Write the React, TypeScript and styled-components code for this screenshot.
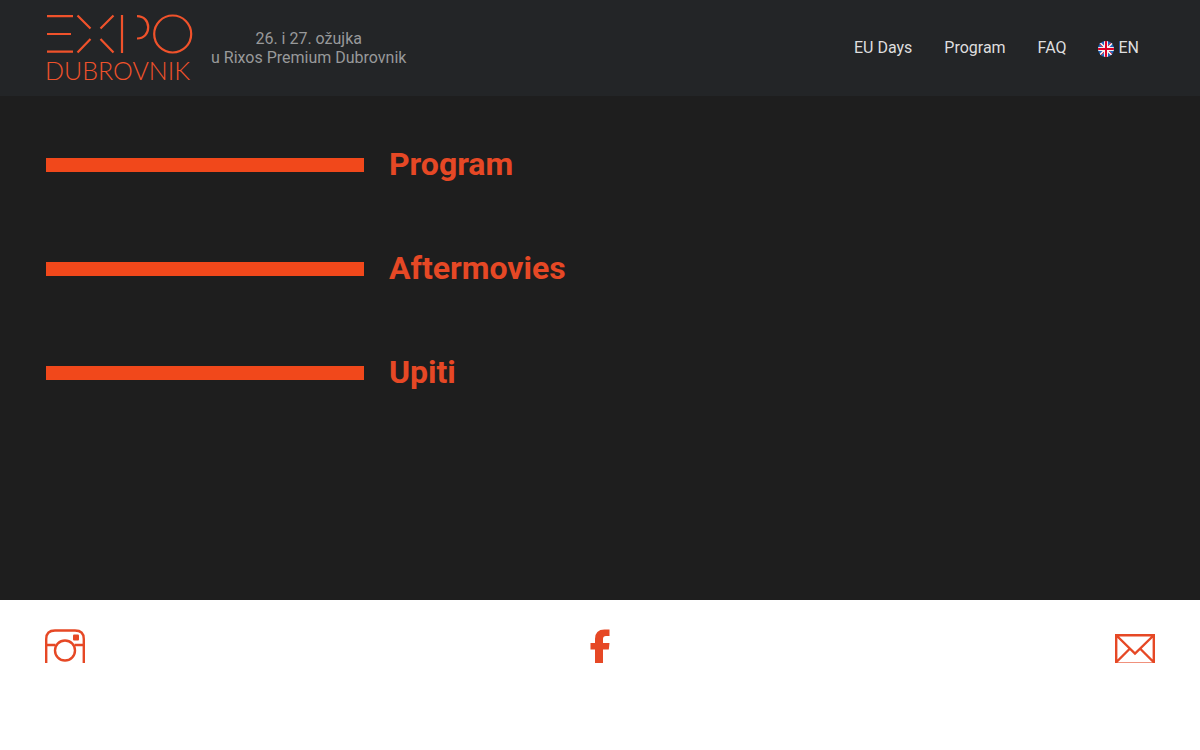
import React from "react";
import styled, { createGlobalStyle } from "styled-components";

const GlobalStyle = createGlobalStyle`
  *, *::before, *::after { box-sizing: border-box; }
  body {
    margin: 0;
    background: #ffffff;
    font-family: Roboto, "Liberation Sans", sans-serif;
    font-size: 16px;
    line-height: 19px;
  }
`;

const Header = styled.header`
  display: flex;
  align-items: center;
  justify-content: space-between;
  height: 96px;
  padding: 0 61px 0 46px;
  background: #232527;
`;

const Brand = styled.div`
  display: flex;
  align-items: center;
  gap: 17px;
`;

const HomeLink = styled.a`
  display: block;
  height: 72px;
`;

const LogoSvg = styled.svg`
  display: block;
  fill: none;
  stroke: #f0522b;
  stroke-width: 2.2;
  overflow: visible;

  text {
    font-family: Lato, sans-serif;
    font-size: 25px;
    font-weight: 300;
    fill: #f0522b;
    stroke: none;
  }
`;

const EventInfo = styled.p`
  margin: 0;
  text-align: center;
  color: #98999a;
`;

const Nav = styled.nav`
  display: flex;
  gap: 32px;
  padding-bottom: 2px;
`;

const NavLink = styled.a`
  display: flex;
  align-items: center;
  gap: 4px;
  color: #dededf;
  text-decoration: none;
`;

const Flag = styled.svg`
  display: block;
  margin-top: 3px;
`;

const Main = styled.main`
  display: flex;
  flex-direction: column;
  gap: 66px;
  min-height: calc(80vh - 96px);
  padding: 49px 45px 66px 46px;
  background: #1e1e1e;
`;

const Section = styled.section`
  display: grid;
  grid-template-columns: 22fr 53fr;
  column-gap: 25px;
  align-items: center;
`;

const Bar = styled.div`
  height: 14px;
  margin-top: 2px;
  background: #f1481b;
`;

const Title = styled.h2`
  margin: 0;
  font-size: 32px;
  line-height: 38px;
  font-weight: 700;
  color: #e64825;
`;

const Footer = styled.footer`
  display: flex;
  justify-content: space-between;
  padding: 29px 45px;
`;

const SocialLink = styled.a`
  display: block;
  color: #e64825;
`;

const SocialSvg = styled.svg`
  display: block;
  fill: none;
  stroke: currentColor;
  stroke-width: 2.4;
`;

function Logo() {
  return (
    <LogoSvg width="148" height="72" viewBox="46 12 148 72" aria-hidden="true">
      <path d="M47 16.200H73M47 34H71M47 51.700H73" />
      <path d="M77.500 15.500L90.500 28.500M113.500 15.500L100.500 28.500M90.500 39L77.500 52.500M100.500 39L113.500 52.500" />
      <path d="M122 15V53" />
      <path d="M137 16.200C144 16.200 148.200 21 148.200 27.300S144 38.500 137 38.500" />
      <circle cx="172.700" cy="34" r="18.500" />
      <text x="45" y="80">DUBROVNIK</text>
    </LogoSvg>
  );
}

function UkFlag() {
  return (
    <Flag width="16" height="16" viewBox="0 0 16 16" aria-hidden="true">
      <defs>
        <clipPath id="flag-circle"><circle cx="8" cy="8" r="8" /></clipPath>
      </defs>
      <g clipPath="url(#flag-circle)">
        <path fill="#1c64bd" d="M0 0H16V16H0Z" />
        <path stroke="#f0f0f0" strokeWidth="2.200" d="M1 1L15 15M15 1L1 15" />
        <path stroke="#d80027" strokeWidth="0.800" d="M1 2L7 8M9 8L15 14M14 1L8 7M8 9L2 15" />
        <path stroke="#f0f0f0" strokeWidth="4" d="M8 0V16M0 8H16" />
        <path stroke="#d80027" strokeWidth="2" d="M8 0V16M0 8H16" />
      </g>
    </Flag>
  );
}

const sections = ["Program", "Aftermovies", "Upiti"];

export default function App() {
  return (
    <>
      <GlobalStyle />
      <Header>
        <Brand>
          <HomeLink href="#" aria-label="Expo Dubrovnik"><Logo /></HomeLink>
          <EventInfo>26. i 27. ožujka<br />u Rixos Premium Dubrovnik</EventInfo>
        </Brand>
        <Nav>
          <NavLink href="#eu-days">EU Days</NavLink>
          <NavLink href="#program">Program</NavLink>
          <NavLink href="#faq">FAQ</NavLink>
          <NavLink href="#en"><UkFlag />EN</NavLink>
        </Nav>
      </Header>
      <Main>
        {sections.map((name) => (
          <Section key={name}>
            <Bar />
            <Title>{name}</Title>
          </Section>
        ))}
      </Main>
      <Footer>
        <SocialLink href="#instagram" aria-label="Instagram">
          <SocialSvg width="40" height="34" viewBox="0 0 40 34">
            <path d="M1.200 34V10Q1.200 1.500 10 1.500H30Q38.800 1.500 38.800 10V34M1 16H10.500M29.500 16H39" />
            <circle cx="20" cy="21.500" r="10" />
            <rect x="28" y="5.500" width="6" height="6" rx="1" fill="currentColor" stroke="none" />
          </SocialSvg>
        </SocialLink>
        <SocialLink href="#facebook" aria-label="Facebook">
          <SocialSvg width="40" height="34" viewBox="0 0 40 34">
            <path fill="currentColor" stroke="none" d="M15 34V20.500H10.500V14H15V10Q15 0.500 24.500 0.500H29.500V7H26Q23 7 23 10V14H29.500L28.800 20.500H23V34Z" />
          </SocialSvg>
        </SocialLink>
        <SocialLink href="#email" aria-label="E-mail">
          <SocialSvg width="40" height="34" viewBox="0 0 40 34">
            <path d="M1.200 34V6.200H38.800V34M1.500 6.500L20 24.500L38.500 6.500M1.500 33L14.500 20M38.500 33L25.500 20" />
            <path strokeWidth="1" opacity="0.600" d="M1 33.500H39" />
          </SocialSvg>
        </SocialLink>
      </Footer>
    </>
  );
}
